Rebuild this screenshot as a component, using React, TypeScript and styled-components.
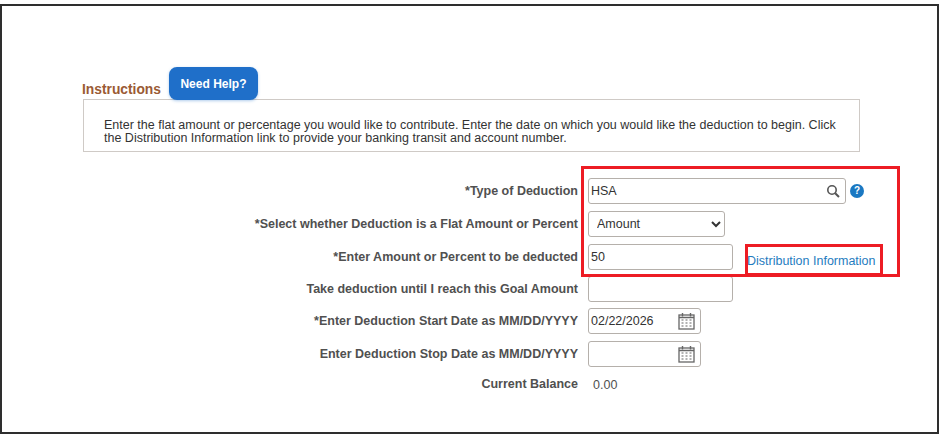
import React from "react";
import styled, { createGlobalStyle } from "styled-components";

const Global = createGlobalStyle`
  html, body { margin: 0; padding: 0; background: #fff; }
  body { width: 946px; height: 438px; overflow: hidden; font-family: "Liberation Sans", Arial, sans-serif; }
`;

const Frame = styled.div`
  position: relative;
  box-sizing: border-box;
  width: 939px;
  height: 430px;
  margin-top: 4px;
  border: 2px solid #2e2e2e;
  background: #fff;
  padding: 60px 0 0 81px;
`;

const HeadRow = styled.div`
  display: flex;
  align-items: flex-end;
  gap: 8px;
  height: 33px;
`;

const Title = styled.h2`
  margin: 0 0 1px -1px;
  font-size: 13.8px;
  line-height: 16px;
  font-weight: 700;
  color: #9a5a34;
`;

const HelpButton = styled.button`
  width: 89px;
  height: 33px;
  margin-bottom: -1px;
  padding: 0;
  border: none;
  border-radius: 8px;
  background: #1f6fc9;
  box-shadow: 0 1px 3px rgba(31, 111, 201, 0.35);
  color: #fff;
  font: 700 12px "Liberation Sans", Arial, sans-serif;
  position: relative;
`;

const InfoBox = styled.div`
  box-sizing: border-box;
  width: 777px;
  height: 53px;
  padding: 19px 12px 0 20px;
  border: 1px solid #cfcac6;
  font-size: 12.5px;
  line-height: 13px;
  color: #333;
  white-space: nowrap;
`;

const Form = styled.div`
  display: grid;
  grid-template-columns: 495px 1fr;
  column-gap: 10px;
  margin-top: 26px;
`;

const Label = styled.div<{ $h: number }>`
  height: ${(p) => p.$h}px;
  display: flex;
  align-items: center;
  justify-content: flex-end;
  font-size: 12.5px;
  font-weight: 700;
  color: #505050;
  white-space: nowrap;
`;

const Field = styled.div<{ $h: number }>`
  height: ${(p) => p.$h}px;
  display: flex;
  align-items: flex-start;
`;

const Control = styled.div<{ $w: number }>`
  box-sizing: border-box;
  width: ${(p) => p.$w}px;
  height: 26px;
  padding: 0 5px 0 2px;
  display: flex;
  align-items: center;
  justify-content: space-between;
  border: 1px solid #b5b0ab;
  border-radius: 3px;
  background: #fff;
  font-size: 12.5px;
  color: #333;
`;

const Dropdown = styled.select`
  box-sizing: border-box;
  width: 137px;
  height: 26px;
  padding: 0 0 0 4px;
  border: 1px solid #b5b0ab;
  border-radius: 3px;
  background: #fff;
  font: 12.5px "Liberation Sans", Arial, sans-serif;
  color: #333;
`;

const HelpDot = styled.span`
  width: 14px;
  height: 14px;
  margin: 6px 0 0 4px;
  border-radius: 50%;
  background: #1a78c2;
  color: #fff;
  font-size: 10px;
  font-weight: 700;
  line-height: 14px;
  text-align: center;
`;

const Link = styled.a`
  margin: 10px 0 0 14px;
  font-size: 12.5px;
  line-height: 15px;
  color: #1f7cc0;
  white-space: nowrap;
`;

const Value = styled.span`
  margin: 4px 0 0 5px;
  font-size: 12.5px;
  color: #505050;
`;

const Highlight = styled.div<{ $x: number; $y: number; $w: number; $h: number }>`
  position: absolute;
  left: ${(p) => p.$x}px;
  top: ${(p) => p.$y}px;
  width: ${(p) => p.$w}px;
  height: ${(p) => p.$h}px;
  box-sizing: border-box;
  border: 3px solid #ed1c24;
  pointer-events: none;
`;

const SearchIcon = () => (
  <svg width="14" height="14" viewBox="0 0 14 14" fill="none" stroke="#555" strokeWidth="1.6">
    <circle cx="6" cy="6" r="4.2" />
    <path d="M9.2 9.2 13 13" strokeWidth="2" />
  </svg>
);

const CalendarIcon = () => (
  <svg width="17" height="18" viewBox="0 0 17 18" fill="none">
    <rect x="1" y="3" width="15" height="14" stroke="#666" strokeWidth="1.3" />
    <path d="M1 5.5h15" stroke="#666" strokeWidth="1.5" />
    <path d="M4.5 1v3.5M12.5 1v3.5" stroke="#666" strokeWidth="1.4" />
    <path
      d="M3.5 8h2M7.5 8h2M11.5 8h2M3.5 11h2M7.5 11h2M11.5 11h2M3.5 14h2M7.5 14h2M11.5 14h2"
      stroke="#999"
      strokeWidth="1.4"
    />
  </svg>
);

export default function App() {
  return (
    <>
      <Global />
      <Frame>
        <HeadRow>
          <Title>Instructions</Title>
          <HelpButton>Need Help?</HelpButton>
        </HeadRow>
        <InfoBox>
          Enter the flat amount or percentage you would like to contribute. Enter the date on which you would like the
          deduction to begin. Click
          <br />
          the Distribution Information link to provide your banking transit and account number.
        </InfoBox>
        <Form>
          <Label $h={26}>*Type of Deduction</Label>
          <Field $h={33}>
            <Control $w={258}>
              HSA
              <SearchIcon />
            </Control>
            <HelpDot>?</HelpDot>
          </Field>
          <Label $h={26}>*Select whether Deduction is a Flat Amount or Percent</Label>
          <Field $h={33}>
            <Dropdown defaultValue="Amount">
              <option>Amount</option>
              <option>Percent</option>
            </Dropdown>
          </Field>
          <Label $h={26}>*Enter Amount or Percent to be deducted</Label>
          <Field $h={32}>
            <Control $w={145}>50</Control>
            <Link>Distribution Information</Link>
          </Field>
          <Label $h={26}>Take deduction until I reach this Goal Amount</Label>
          <Field $h={32}>
            <Control $w={145} />
          </Field>
          <Label $h={26}>*Enter Deduction Start Date as MM/DD/YYYY</Label>
          <Field $h={33}>
            <Control $w={113}>
              02/22/2026
              <CalendarIcon />
            </Control>
          </Field>
          <Label $h={26}>Enter Deduction Stop Date as MM/DD/YYYY</Label>
          <Field $h={33}>
            <Control $w={113}>
              <span />
              <CalendarIcon />
            </Control>
          </Field>
          <Label $h={20}>Current Balance</Label>
          <Field $h={20}>
            <Value>0.00</Value>
          </Field>
        </Form>
        <Highlight $x={579} $y={160} $w={319} $h={111} />
        <Highlight $x={743} $y={238} $w={138} $h={32} />
      </Frame>
    </>
  );
}
